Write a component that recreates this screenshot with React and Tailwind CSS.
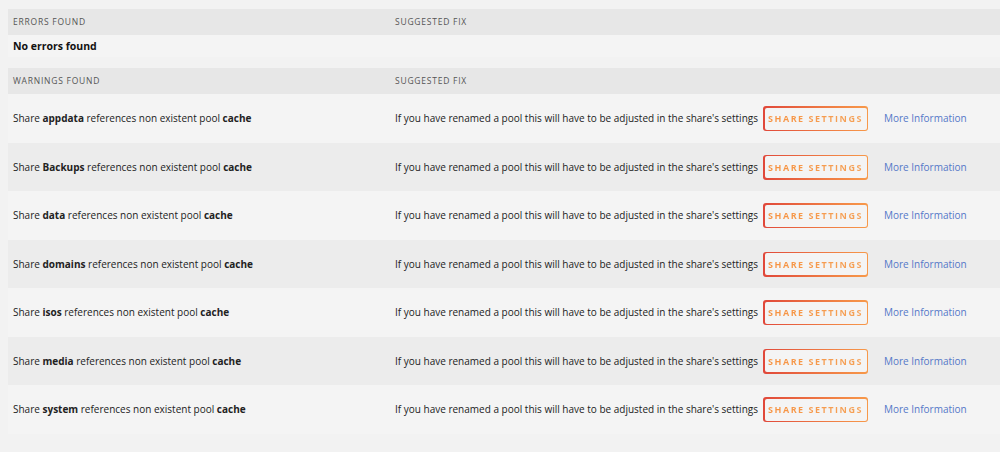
const shares = ["appdata", "Backups", "data", "domains", "isos", "media", "system"];

const font = { fontFamily: '"Open Sans", "Liberation Sans", sans-serif' };

const HeaderRow = ({ left, right }) => (
  <div className="flex h-[26px] items-center bg-[#e7e7e7] text-[8.5px] uppercase tracking-[0.09em] text-[#555]">
    <div className="w-[387px] pl-[5px]">{left}</div>
    <div>{right}</div>
  </div>
);

const ShareButton = () => (
  <span className="inline-flex h-[25px] w-[105px] shrink-0 rounded-[3px] bg-gradient-to-r from-[#e0473a] to-[#f7994a] p-[1.5px]">
    <span className="flex flex-1 items-center justify-center rounded-[2px] bg-[#f4f4f4]">
      <span className="bg-gradient-to-r from-[#f79240] to-[#f5a35a] bg-clip-text text-[9px] font-bold uppercase tracking-[0.17em] text-transparent">
        Share Settings
      </span>
    </span>
  </span>
);

export default function App() {
  return (
    <div className="min-h-[452px] bg-[#f2f2f2] pt-[9px] pl-[8px] text-[#222]" style={font}>
      <HeaderRow left="Errors Found" right="Suggested Fix" />
      <div className="flex h-[22px] items-center bg-[#f4f4f4] pl-[5px] pt-[1px] text-[10.5px] font-bold text-[#111]">
        No errors found
      </div>
      <div className="h-[11px]" />
      <HeaderRow left="Warnings Found" right="Suggested Fix" />
      {shares.map((name, i) => (
        <div
          key={name}
          className={`flex h-[48.5px] items-center pt-[1px] text-[10px] ${i % 2 === 0 ? "bg-[#f4f4f4]" : "bg-[#ececec]"}`}
        >
          <div className="w-[387px] pl-[5px]">
            Share <b className="font-bold">{name}</b> references non existent pool <b className="font-bold">cache</b>
          </div>
          <div className="flex items-center">
            <span className="w-[367px] whitespace-nowrap">
              If you have renamed a pool this will have to be adjusted in the share's settings
            </span>
            <span className="ml-[1px]">
              <ShareButton />
            </span>
            <a className="ml-[16px] text-[#5578c8]">More Information</a>
          </div>
        </div>
      ))}
    </div>
  );
}
